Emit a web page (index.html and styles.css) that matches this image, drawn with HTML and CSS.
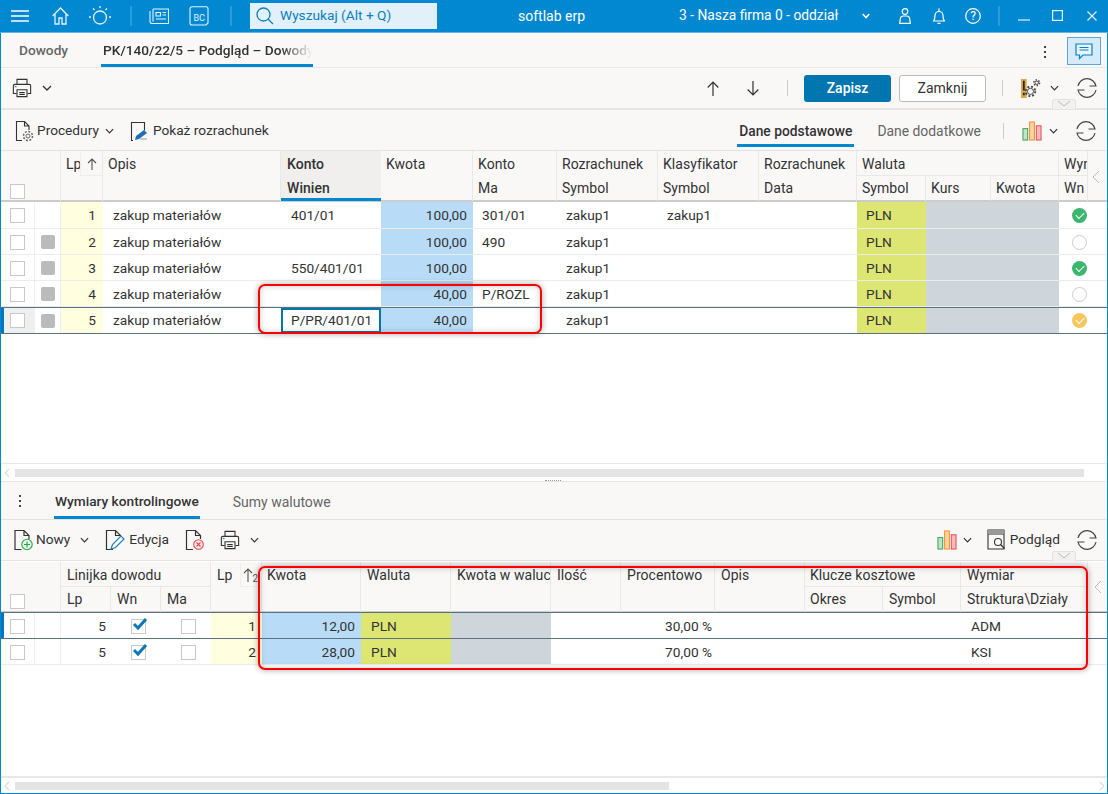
FILE: index.html
```html
<!DOCTYPE html>
<html lang="pl">
<head>
<meta charset="utf-8">
<title>softlab erp</title>
<link rel="stylesheet" href="styles.css">
</head>
<body>
<svg class="defs" width="0" height="0">
  <symbol id="i-print" viewBox="0 0 22 22"><g fill="none" stroke="#333" stroke-width="1.2"><path d="M5.500 7V1.500h11V7"/><path d="M5 17H1.500V8.500A1.500 1.500 0 0 1 3 7h16a1.500 1.500 0 0 1 1.500 1.500V17H17"/><path d="M5.500 13h11v7.500h-11z"/><path d="M8 16h6M8 18h6"/></g><path d="M3 9.500h2" stroke="#0288d1" stroke-width="1.2"/></symbol>
  <symbol id="i-chev" viewBox="0 0 10 6"><path d="M1 1l4 4 4-4" fill="none" stroke="#333" stroke-width="1.3"/></symbol>
  <symbol id="i-sync" viewBox="0 0 20 20"><g fill="none" stroke="#444" stroke-width="1.2"><path d="M1 8A9.200 9.200 0 0 1 19 8H12.500"/><path d="M19 12A9.200 9.200 0 0 1 1 12H7.500"/></g></symbol>
  <symbol id="i-chart" viewBox="0 0 21 21"><rect x="1" y="8" width="5" height="12" fill="#bfe3c3" stroke="#2da44e"/><rect x="8" y="1" width="5" height="19" fill="#fbd3a1" stroke="#f08a24"/><rect x="15" y="5" width="5" height="15" fill="#f7b9b9" stroke="#e5484d"/></symbol>
  <symbol id="i-doc" viewBox="0 0 20 22"><path d="M8 20.500H1.500v-19h9l5 5V10M10.500 1.500v5h5" fill="none" stroke="#333" stroke-width="1.2"/></symbol>
</svg>

<div class="app">
  <header class="titlebar">
    <svg class="tb-burger" width="18" height="12" viewBox="0 0 18 12"><path d="M0 1h18M0 6h18M0 11h18" stroke="#fff" stroke-width="1.300"/></svg>
    <svg class="tb-home" width="17" height="18" viewBox="0 0 17 18"><path d="M.7 9L8.500 1l7.800 8M3 7v10h4v-6h3v6h4V7" fill="none" stroke="#e3f3fc" stroke-width="1.300"/></svg>
    <svg class="tb-sun" width="22" height="20" viewBox="0 0 22 20"><g fill="none" stroke="#e3f3fc" stroke-width="1.300"><circle cx="11" cy="11.500" r="6.500"/><path d="M11 0v2M4 2.500l1.500 1.500M18 2.500L16.500 4M0 11h2M20 11h2"/></g></svg>
    <span class="tb-sep tb-sep1"></span>
    <svg class="tb-news" width="20" height="16" viewBox="0 0 20 16"><g fill="none" stroke="#e3f3fc" stroke-width="1.100"><path d="M4 1h15.500v14.500H3a2 2 0 0 1-2-2V3"/><path d="M4 1v12.500"/><path d="M7 4.500h4.500V8H7zM13.500 4.500H17M13.500 7H17M7 11h10"/></g></svg>
    <svg class="tb-bc" width="20" height="20" viewBox="0 0 20 20"><path d="M3 .7h14a2 2 0 0 1 2 2V17l-2 2H3a2 2 0 0 1-2-2V2.700a2 2 0 0 1 2-2z" fill="none" stroke="#e3f3fc" stroke-width="1.100"/><text x="4.500" y="15" class="bc-text">BC</text></svg>
    <span class="tb-sep tb-sep2"></span>
    <div class="search">
      <svg width="18" height="18" viewBox="0 0 18 18"><circle cx="7.500" cy="7.500" r="6.500" fill="none" stroke="#0b7fc0" stroke-width="1.300"/><path d="M12 12l5 5" stroke="#0b7fc0" stroke-width="1.300"/></svg>
      <span>Wyszukaj (Alt + Q)</span>
    </div>
    <div class="tb-brand">softlab erp</div>
    <div class="tb-firm">3 - Nasza firma 0 - oddział</div>
    <svg class="tb-firmchev" width="8" height="6" viewBox="0 0 8 6"><path d="M.7 1L4 4.500 7.300 1" fill="none" stroke="#fff" stroke-width="1.700"/></svg>
    <svg class="tb-user" width="12" height="16" viewBox="0 0 12 16"><g fill="none" stroke="#fff" stroke-width="1.200"><circle cx="6" cy="3.500" r="2.800"/><path d="M.7 15.300l.7-5a3 3 0 0 1 3-2.300h3.200a3 3 0 0 1 3 2.300l.7 5z"/></g></svg>
    <svg class="tb-bell" width="12" height="16" viewBox="0 0 12 16"><g fill="none" stroke="#fff" stroke-width="1.200"><path d="M.5 13c1.200-1.300 1.500-3 1.500-5.500a4 4 0 0 1 8 0c0 2.500.3 4.200 1.500 5.500z"/><path d="M4.500 15.300h3M6 .5v3"/></g></svg>
    <svg class="tb-help" width="16" height="16" viewBox="0 0 16 16"><circle cx="8" cy="8" r="7.300" fill="none" stroke="#fff" stroke-width="1.200"/><text x="8" y="12" class="help-text">?</text></svg>
    <span class="tb-sep tb-sep3"></span>
    <svg class="tb-min" width="12" height="2" viewBox="0 0 12 2"><path d="M0 1h12" stroke="#e3f3fc" stroke-width="1.200"/></svg>
    <svg class="tb-max" width="11" height="11" viewBox="0 0 11 11"><rect x=".6" y=".6" width="9.800" height="9.800" fill="none" stroke="#e3f3fc" stroke-width="1.200"/></svg>
    <svg class="tb-close" width="10" height="10" viewBox="0 0 10 10"><path d="M.5.5l9 9M9.500.5l-9 9" stroke="#e3f3fc" stroke-width="1.200"/></svg>
  </header>

  <nav class="tabs">
    <span class="tab-plain">Dowody</span>
    <span class="tab-active"><span class="tab-fade">PK/140/22/5 – Podgląd – Dowody</span></span>
    <span class="kebab"><i></i><i></i><i></i></span>
    <span class="chat">
      <svg width="18" height="17" viewBox="0 0 18 17"><path d="M1 1h16v11H8l-3.500 3.500V12H1z" fill="#e7f4fc" stroke="#0b7fc0" stroke-width="1.200"/><path d="M4.500 4.500h9M4.500 7h9" stroke="#0b7fc0" stroke-width="1.200"/></svg>
    </span>
  </nav>

  <div class="toolbar1">
    <svg class="ic20" width="20" height="20"><use href="#i-print"/></svg>
    <svg class="chev c1" width="10" height="6"><use href="#i-chev"/></svg>
    <span class="grow"></span>
    <svg width="12" height="15" viewBox="0 0 12 15"><path d="M6 15V1M.7 6.500L6 1l5.300 5.500" fill="none" stroke="#333" stroke-width="1.200"/></svg>
    <svg class="arrow2" width="12" height="15" viewBox="0 0 12 15"><path d="M6 0v14M.7 8.500L6 14l5.300-5.500" fill="none" stroke="#333" stroke-width="1.200"/></svg>
    <span class="vsep s1"></span>
    <button class="btn-primary">Zapisz</button>
    <button class="btn-plain">Zamknij</button>
    <span class="vsep s2"></span>
    <svg class="gear" width="21" height="21" viewBox="0 0 22 22"><rect x="1" y="1" width="6" height="20" fill="#d9a848"/><path d="M4 3v10M4 15.500v2.500" stroke="#222" stroke-width="1.800"/><g fill="none" stroke="#444"><circle cx="11" cy="14" r="3.200"/><circle cx="11" cy="14" r="5" stroke-width="2" stroke-dasharray="2 1.930"/><circle cx="17.500" cy="5" r="1.800"/><circle cx="17.500" cy="5" r="3" stroke-width="1.600" stroke-dasharray="1.500 1.640"/></g></svg>
    <svg class="chev c2" width="9" height="6"><use href="#i-chev"/></svg>
    <svg class="sync s3" width="20" height="20"><use href="#i-sync"/></svg>
    <span class="collapse-tab t1"><svg width="14" height="7" viewBox="0 0 14 7"><path d="M1 1l6 5 6-5" fill="none" stroke="#bbb"/></svg></span>
  </div>

  <div class="toolbar2">
    <span class="tool t-proc">
      <svg width="19" height="22" viewBox="0 0 19 22"><path d="M7 20.500H1.500v-19h8l4.500 4.500v4M9.500 1.500V6H14" fill="none" stroke="#333" stroke-width="1.100"/><circle cx="13" cy="16" r="2" fill="none" stroke="#666"/><circle cx="13" cy="16" r="4.500" fill="none" stroke="#666" stroke-width="1.500" stroke-dasharray="2 1.500"/></svg>
      Procedury
    </span>
    <svg class="chev c3" width="9" height="6"><use href="#i-chev"/></svg>
    <span class="tool t-pokaz">
      <svg width="19" height="22" viewBox="0 0 19 22"><path d="M3 20.500H1.500v-18h13v8" fill="none" stroke="#333" stroke-width="1.100"/><path d="M5 20l1-4 8-6 3 3-8 6z" fill="#1f6fb5"/><path d="M10 19h7" stroke="#999"/></svg>
      Pokaż rozrachunek
    </span>
    <span class="grow"></span>
    <span class="sub-active">Dane podstawowe</span>
    <span class="sub-plain">Dane dodatkowe</span>
    <span class="vsep s4"></span>
    <svg class="chart" width="20" height="20"><use href="#i-chart"/></svg>
    <svg class="chev c4" width="9" height="6"><use href="#i-chev"/></svg>
    <svg class="sync s5" width="20" height="20"><use href="#i-sync"/></svg>
  </div>

  <section class="grid grid-top">
    <div class="ghead g1">
      <div class="hc h-check"><span class="cb"></span></div>
      <div class="hc h-status"></div>
      <div class="hc h-lp">Lp<span class="sort"><svg width="10" height="12" viewBox="0 0 10 12"><path d="M5 12V1M1 5l4-4 4 4" fill="none" stroke="#555" stroke-width="1.100"/></svg></span></div>
      <div class="hc h-span">Opis</div>
      <div class="hc h-span h-sel"><b>Konto</b><b>Winien</b></div>
      <div class="hc h-span">Kwota</div>
      <div class="hc h-span"><span>Konto</span><span>Ma</span></div>
      <div class="hc h-span"><span>Rozrachunek</span><span>Symbol</span></div>
      <div class="hc h-span"><span>Klasyfikator</span><span>Symbol</span></div>
      <div class="hc h-span"><span>Rozrachunek</span><span>Data</span></div>
      <div class="hc h-group3">Waluta</div>
      <div class="hc h-group1">Wyn</div>
      <div class="hc h-rest"></div>
      <div class="hc h-sub">Symbol</div>
      <div class="hc h-sub">Kurs</div>
      <div class="hc h-sub">Kwota</div>
      <div class="hc h-sub">Wn</div>
    </div>
    <div class="row first g1"><div class="c"><span class="cb"></span></div><div class="c"></div><div class="c lp">1</div><div class="c txt">zakup materiałów</div><div class="c txt">401/01</div><div class="c kw">100,00</div><div class="c txt">301/01</div><div class="c txt">zakup1</div><div class="c txt">zakup1</div><div class="c"></div><div class="c pln">PLN</div><div class="c gr"></div><div class="c gr"></div><div class="c"><span class="dot ok"></span></div><div class="c"></div></div>
    <div class="row g1"><div class="c"><span class="cb"></span></div><div class="c"><span class="sq"></span></div><div class="c lp">2</div><div class="c txt">zakup materiałów</div><div class="c"></div><div class="c kw">100,00</div><div class="c txt">490</div><div class="c txt">zakup1</div><div class="c"></div><div class="c"></div><div class="c pln">PLN</div><div class="c gr"></div><div class="c gr"></div><div class="c"><span class="dot"></span></div><div class="c"></div></div>
    <div class="row g1"><div class="c"><span class="cb"></span></div><div class="c"><span class="sq"></span></div><div class="c lp">3</div><div class="c txt">zakup materiałów</div><div class="c txt">550/401/01</div><div class="c kw">100,00</div><div class="c"></div><div class="c txt">zakup1</div><div class="c"></div><div class="c"></div><div class="c pln">PLN</div><div class="c gr"></div><div class="c gr"></div><div class="c"><span class="dot ok"></span></div><div class="c"></div></div>
    <div class="row g1"><div class="c"><span class="cb"></span></div><div class="c"><span class="sq"></span></div><div class="c lp">4</div><div class="c txt">zakup materiałów</div><div class="c"></div><div class="c kw">40,00</div><div class="c txt">P/ROZL</div><div class="c txt">zakup1</div><div class="c"></div><div class="c"></div><div class="c pln">PLN</div><div class="c gr"></div><div class="c gr"></div><div class="c"><span class="dot"></span></div><div class="c"></div></div>
    <div class="row g1 sel"><div class="c c-mark c-grey"><span class="cb"></span></div><div class="c"><span class="sq"></span></div><div class="c lp">5</div><div class="c txt">zakup materiałów</div><div class="c txt focus">P/PR/401/01</div><div class="c kw">40,00</div><div class="c"></div><div class="c txt">zakup1</div><div class="c"></div><div class="c"></div><div class="c pln">PLN</div><div class="c gr"></div><div class="c gr"></div><div class="c"><span class="dot warn"></span></div><div class="c"></div></div>
    <span class="side-arrow a1"><svg width="8" height="14" viewBox="0 0 8 14"><path d="M7 1L1 7l6 6" fill="none" stroke="#bbb"/></svg></span>
    <span class="redbox rb1"></span>
  </section>

  <div class="hscroll hs1"><svg width="6" height="10" viewBox="0 0 6 10"><path d="M5 1L1 5l4 4" fill="none" stroke="#ddd" stroke-width="1.300"/></svg><span class="thumb thumb1"></span></div>
  <div class="splitter"><span class="grip"></span></div>

  <nav class="tabs2">
    <span class="kebab k2"><i></i><i></i><i></i></span>
    <span class="sub-active s-wym">Wymiary kontrolingowe</span>
    <span class="sub-plain s-sum">Sumy walutowe</span>
  </nav>

  <div class="toolbar3">
    <span class="tool t-now">
      <svg width="21" height="22" viewBox="0 0 21 22"><use href="#i-doc"/><circle cx="14" cy="15.500" r="5.200" fill="#e6f6e9" stroke="#2da44e" stroke-width="1.100"/><path d="M14 12.500v6M11 15.500h6" stroke="#2da44e" stroke-width="1.100"/></svg>
      Nowy
    </span>
    <svg class="chev c5" width="9" height="6"><use href="#i-chev"/></svg>
    <span class="tool t-edy">
      <svg width="20" height="22" viewBox="0 0 20 22"><use href="#i-doc"/><path d="M6 20l1.500-4.500L16 7l3 3-8.500 8.500z" fill="#fff" stroke="#1f7fc4" stroke-width="1.200"/></svg>
      Edycja
    </span>
    <svg class="t-del" width="20" height="22" viewBox="0 0 20 22"><use href="#i-doc"/><circle cx="13.500" cy="15.500" r="4.800" fill="#fdeaea" stroke="#e5484d" stroke-width="1.100"/><path d="M11.500 13.500l4 4M15.500 13.500l-4 4" stroke="#e5484d" stroke-width="1.100"/></svg>
    <svg class="t-print" width="20" height="20"><use href="#i-print"/></svg>
    <svg class="chev c6" width="9" height="6"><use href="#i-chev"/></svg>
    <span class="grow"></span>
    <svg class="chart" width="20" height="20"><use href="#i-chart"/></svg>
    <svg class="chev c7" width="9" height="6"><use href="#i-chev"/></svg>
    <span class="tool t-pod">
      <svg width="19" height="22" viewBox="0 0 19 22"><path d="M1 1h16v19H1z M1 5h16" fill="none" stroke="#333" stroke-width="1.100"/><rect x="1" y="1" width="16" height="4" fill="#999"/><circle cx="11" cy="13" r="3.500" fill="#fff" stroke="#333" stroke-width="1.100"/><path d="M13.500 15.500l4 4" stroke="#333" stroke-width="1.300"/></svg>
      Podgląd
    </span>
    <svg class="sync s6" width="20" height="20"><use href="#i-sync"/></svg>
    <span class="collapse-tab t2"><svg width="14" height="7" viewBox="0 0 14 7"><path d="M1 1l6 5 6-5" fill="none" stroke="#bbb"/></svg></span>
  </div>

  <section class="grid grid-bot">
    <div class="ghead g2">
      <div class="hc h-check"><span class="cb"></span></div>
      <div class="hc h-status"></div>
      <div class="hc b-group">Linijka dowodu</div>
      <div class="hc h-lp2">Lp<span class="sort sort2"><svg width="16" height="14" viewBox="0 0 16 14"><path d="M5 14V1M1 5l4-4 4 4" fill="none" stroke="#555" stroke-width="1.100"/><text x="9.500" y="14" class="sort-n">2</text></svg></span></div>
      <div class="hc h-span">Kwota</div>
      <div class="hc h-span">Waluta</div>
      <div class="hc h-span">Kwota w waluci</div>
      <div class="hc h-span">Ilość</div>
      <div class="hc h-span">Procentowo</div>
      <div class="hc h-span">Opis</div>
      <div class="hc b-group2">Klucze kosztowe</div>
      <div class="hc b-group3">Wymiar</div>
      <div class="hc h-rest"></div>
      <div class="hc h-sub">Lp</div>
      <div class="hc h-sub">Wn</div>
      <div class="hc h-sub">Ma</div>
      <div class="hc h-sub">Okres</div>
      <div class="hc h-sub">Symbol</div>
      <div class="hc h-sub">Struktura\Działy</div>
    </div>
    <div class="row g2 sel2"><div class="c c-mark"><span class="cb"></span></div><div class="c"></div><div class="c num">5</div><div class="c center"><span class="cb on"><svg width="16" height="14" viewBox="0 0 16 14"><path d="M2 7l4 4 8-9" fill="none" stroke="#0b78b8" stroke-width="3"/></svg></span></div><div class="c center"><span class="cb"></span></div><div class="c lp">1</div><div class="c kw">12,00</div><div class="c pln">PLN</div><div class="c gr"></div><div class="c"></div><div class="c num pct">30,00 %</div><div class="c"></div><div class="c"></div><div class="c"></div><div class="c txt">ADM</div><div class="c"></div></div>
    <div class="row g2"><div class="c"><span class="cb"></span></div><div class="c"></div><div class="c num">5</div><div class="c center"><span class="cb on"><svg width="16" height="14" viewBox="0 0 16 14"><path d="M2 7l4 4 8-9" fill="none" stroke="#0b78b8" stroke-width="3"/></svg></span></div><div class="c center"><span class="cb"></span></div><div class="c lp">2</div><div class="c kw">28,00</div><div class="c pln">PLN</div><div class="c gr"></div><div class="c"></div><div class="c num pct">70,00 %</div><div class="c"></div><div class="c"></div><div class="c"></div><div class="c txt">KSI</div><div class="c"></div></div>
    <span class="side-arrow a2"><svg width="8" height="14" viewBox="0 0 8 14"><path d="M7 1L1 7l6 6" fill="none" stroke="#bbb"/></svg></span>
    <span class="redbox rb2"></span>
  </section>

  <div class="hscroll hs2"><svg width="6" height="10" viewBox="0 0 6 10"><path d="M5 1L1 5l4 4" fill="none" stroke="#ddd" stroke-width="1.300"/></svg><span class="thumb thumb2"></span><span class="grow"></span><svg width="6" height="10" viewBox="0 0 6 10"><path d="M1 1l4 4-4 4" fill="none" stroke="#ddd" stroke-width="1.300"/></svg></div>
</div>
</body>
</html>
```
FILE: styles.css
```css
* { box-sizing: border-box; }
html, body { margin: 0; padding: 0; }
body { width: 1108px; height: 794px; overflow: hidden; background: #fff; font: 13.7px/1 Roboto, "Liberation Sans", sans-serif; color: #333; }
.defs { position: absolute; }
svg { display: block; flex: none; }
.grow { flex: 1; }

.app { width: 1108px; height: 794px; display: flex; flex-direction: column; border: 1px solid #0288d1; border-top: 0; background: #fff; position: relative; }

/* title bar */
.titlebar { height: 33px; margin: 0 -1px; background: #0288d1; border-bottom: 1px solid #5fb4e3; display: flex; align-items: center; color: #fff; flex: none; }
.tb-burger { margin-left: 11px; }
.tb-home { margin-left: 23px; }
.tb-sun { margin-left: 20px; }
.tb-sep { width: 2px; height: 20px; background: #2a9bdb; }
.tb-sep1 { margin-left: 19px; }
.tb-news { margin-left: 17px; }
.tb-bc { margin-left: 20px; }
.tb-sep2 { margin-left: 21px; }
.bc-text { font: 9px Roboto, sans-serif; fill: #e3f3fc; }
.help-text { font: 12px Roboto, sans-serif; fill: #fff; text-anchor: middle; }
.search { margin-left: 18px; width: 187px; height: 26px; background: #e1f0f9; color: #0b7fc0; display: flex; align-items: center; gap: 6px; padding-left: 6px; }
.tb-brand { margin-left: 81px; width: 66px; white-space: nowrap; font-size: 14px; }
.tb-firm { margin-left: 95px; white-space: nowrap; width: 159px; font-size: 13.8px; }
.tb-firmchev { margin-left: 24px; }
.tb-user { margin-left: 29px; }
.tb-bell { margin-left: 22px; }
.tb-help { margin-left: 20px; }
.tb-sep3 { margin-left: 17px; }
.tb-min { margin-left: 18px; margin-top: 8px; }
.tb-max { margin-left: 22px; margin-top: -2px; }
.tb-close { margin-left: 24px; margin-top: 0; }

/* document tabs */
.tabs { height: 35px; background: #f9f8f7; border-bottom: 1px solid #e8e8e6; display: flex; align-items: stretch; padding-left: 18px; flex: none; }
.tab-plain { color: #666; font-weight: 500; padding-top: 11px; width: 82px; }
.tab-active { width: 212px; border-bottom: 3px solid #0288d1; padding: 11px 0 0 2px; font-weight: 500; color: #333; height: 34px; }
.tab-fade { display: block; width: 209px; white-space: nowrap; overflow: hidden; -webkit-mask-image: linear-gradient(90deg, #000 85%, transparent 100%); mask-image: linear-gradient(90deg, #000 85%, transparent 100%); }
.kebab { display: flex; flex-direction: column; gap: 3px; margin-left: 731px; margin-top: 13px; }
.kebab i { width: 2px; height: 2px; background: #444; display: block; }
.chat { margin-left: 21px; margin-top: 4px; width: 34px; height: 28px; background: #d5ebf9; border: 1px solid #5aa8d6; display: flex; align-items: center; justify-content: center; }

/* main toolbar */
.toolbar1 { height: 42px; background: #f9f8f7; border-bottom: 2px solid #e5e5e3; display: flex; align-items: center; padding-left: 11px; position: relative; flex: none; }
.chev.c1 { margin-left: 10px; }
.arrow2 { margin-left: 28px; }
.vsep { width: 1px; height: 16px; background: #ccc; }
.vsep.s1 { margin-left: 28px; }
.btn-primary { margin-left: 16px; width: 87px; height: 27px; border: 0; border-radius: 3px; background: #0076b0; color: #fff; font: 500 14px Roboto, sans-serif; padding: 0; }
.btn-plain { margin-left: 8px; width: 87px; height: 27px; border: 1px solid #bbb; border-radius: 3px; background: #fff; color: #333; font: 14px Roboto, sans-serif; padding: 0; }
.vsep.s2 { margin-left: 16px; }
.gear { margin-left: 17px; }
.chev.c2 { margin-left: 9px; }
.sync.s3 { margin-left: 18px; margin-right: 10px; }
.collapse-tab { position: absolute; width: 24px; height: 10px; background: #f2f1ef; border: 1px solid #e2e2e0; border-bottom: 0; border-radius: 3px 3px 0 0; display: flex; justify-content: center; }
.collapse-tab.t1 { left: 1051px; bottom: -1px; }

/* second toolbar */
.toolbar2 { height: 41px; padding-top: 1px; background: #f9f8f7; border-bottom: 1px solid #e3e3e1; display: flex; align-items: center; padding-left: 14px; flex: none; }
.tool { display: flex; align-items: center; white-space: nowrap; color: #333; }
.t-proc { gap: 3px; }
.chev.c3 { margin-left: 6px; }
.t-pokaz { gap: 4px; margin-left: 16px; }
.sub-active { font-weight: 500; font-size: 13.8px; color: #333; border-bottom: 3px solid #0288d1; align-self: flex-end; height: 27px; margin-bottom: 3px; padding: 5px 2px 0; }
.sub-plain { color: #666; font-size: 13.9px; align-self: flex-end; height: 27px; margin-bottom: 3px; padding-top: 5px; margin-left: 23px; }
.vsep.s4 { margin-left: 22px; }
.toolbar2 .chart { margin-left: 18px; }
.chev.c4 { margin-left: 7px; }
.sync.s5 { margin-left: 18px; margin-right: 11px; }

/* grids */
.grid { position: relative; flex: none; }
.grid-top { height: 312px; }
.grid-bot { flex: 1; }
.g1 { display: grid; grid-template-columns: 34px 26px 42px 178px 100px 92px 84px 101px 101px 98px 69px 65px 68px 29px 1fr; }
.g2 { display: grid; grid-template-columns: 34px 26px 50px 50px 50px 51px 99px 90px 100px 70px 94px 90px 78px 78px 127px 1fr; }
.ghead { background: #f9f8f7; grid-template-rows: 25px 25px; border-bottom: 2px solid #ccc; height: 51px; }
.hc { font-size: 14px; letter-spacing: .05px; color: #333; border-right: 1px solid #e8e8e6; padding: 6px 0 0 5px; white-space: nowrap; overflow: hidden; }
.g2 .hc { padding-left: 6px; }
.g2 .hc:nth-child(5), .g2 .b-group2, .g2 .h-sub:nth-last-child(3) { padding-left: 5px; }
.h-check, .h-status, .h-lp, .h-span, .h-lp2 { grid-row: 1 / 3; }
.h-check { padding: 33px 0 0 9px; border-right: 0; grid-column: 1; }
.g2 .h-check { padding: 32px 0 0 9px; }
.h-status, .g2 .h-status { padding: 0; grid-column: 2; }
.h-lp { display: flex; padding: 6px 0 0 5px; position: relative; }
.h-lp2 { position: relative; grid-column: 6; }
.sort { position: absolute; top: 1px; right: 0; width: 22px; height: 24px; border: 1px solid #eee; border-top: 0; border-right: 0; display: flex; align-items: center; justify-content: center; }
.sort2 { right: 0; width: 21px; }
.sort-n { font: 10px Roboto, sans-serif; fill: #555; }
.h-span { display: flex; flex-direction: column; gap: 10px; }
.h-span b, .h-span span { display: block; }
.h-span b { font-weight: 500; }
.h-sel { background: #f0efed; box-shadow: inset 0 -3px 0 #0288d1; border-right: 0; padding-left: 6px; }
.h-group3 { grid-column: span 3; border-bottom: 1px solid #e8e8e6; }
.h-group1 { border-bottom: 1px solid #e8e8e6; }
.h-rest { grid-row: 1 / 3; grid-column: -2 / -1; border: 0; }
.h-sub { padding-top: 5px; }
.b-group { grid-column: 3 / span 3; grid-row: 1; border-bottom: 1px solid #e8e8e6; }
.b-group2 { grid-column: 13 / span 2; grid-row: 1; border-bottom: 1px solid #e8e8e6; }
.b-group3 { grid-column: 15; grid-row: 1; border-bottom: 1px solid #e8e8e6; }

.grid-bot .ghead { margin-top: 1px; }

.row { --t: 2px; height: 26px; border-bottom: 1px solid #ecece9; position: relative; background: #fff; }
.row.first { --t: 1px; height: 27px; }
.c { display: flex; align-items: center; color: #333; min-width: 0; white-space: nowrap; padding-top: 1px; }
.row .c:nth-child(-n+2) { border-right: 1px solid #f0f0ee; }
.c > .cb { margin-left: 9px; }
.txt { padding-left: 10px; padding-top: var(--t); }
.g1 .c.txt:nth-child(n+7) { padding-left: 9px; }
.lp { background: #ffffe0; justify-content: flex-end; padding-right: 6px; padding-top: var(--t); }
.g1 .lp { padding-right: 7px; }
.kw { background: #b8dcf8; justify-content: flex-end; padding-right: 6px; padding-top: var(--t); }
.pln { background: #dde672; padding-left: 10px; padding-top: var(--t); }
.g1 .pln { padding-left: 9px; }
.gr { background: #ced6dc; }
.num { justify-content: flex-end; padding-right: 5px; padding-top: var(--t); }
.pct { padding-right: 3px; }
.center { justify-content: center; padding-left: 5px; }
.center > .cb { margin-left: 0; }
.cb { display: inline-block; width: 15px; height: 15px; background: #fff; border: 1px solid #c8c8c8; position: relative; }
.cb.on svg { position: absolute; left: 0; top: -3px; }
.sq { width: 14px; height: 14px; border-radius: 2px; background: #bbb; margin-left: 6px; }
.dot { width: 15px; height: 15px; border-radius: 50%; border: 1px solid #ccc; background: #fff; margin-left: 13px; position: relative; }
.dot.ok, .dot.warn { border: 0; }
.dot.ok { background: #3db56e; }
.dot.warn { background: #f7c65c; }
.dot.ok::after, .dot.warn::after { content: ""; position: absolute; left: 4px; top: 4px; width: 7px; height: 4px; border-left: 1.500px solid #fff; border-bottom: 1.500px solid #fff; transform: rotate(-45deg); }

.row.sel { --t: 0; border-top: 1px solid #5a7280; border-bottom: 1px solid #5a7280; height: 27px; }
.sel .c { padding-top: 0; }
.sel2 { border-top: 1px solid #5a7280; border-bottom: 1px solid #5a7280; margin-top: -1px; height: 27px; }
.c-mark { box-shadow: inset 3px 0 0 #0277bd; }
.c-grey { background: #efefef; }
.focus { border: 2px solid #0277a8; padding-left: 8px; background: #fff; }

.side-arrow { position: absolute; }
.a1 { left: 1091px; top: 19px; }
.a2 { left: 1093px; top: 19px; }
.redbox { position: absolute; border: 2px solid #f00; border-radius: 7px; box-shadow: 0 0 6px rgba(0,0,0,.35), inset 0 0 6px rgba(0,0,0,.2); pointer-events: none; }
.rb1 { left: 257px; top: 133px; width: 284px; height: 50px; }
.rb2 { left: 257px; top: 5px; width: 830px; height: 104px; }

/* scrollbars */
.hscroll { display: flex; align-items: center; border-top: 1px solid #e8e8e6; background: #fff; padding-left: 3px; flex: none; }
.hs1 { height: 18px; }
.hs2 { height: 17px; border-top-width: 2px; padding-right: 2px; }
.thumb { height: 8px; background: #e4e4e4; }
.thumb1 { width: 1069px; margin-left: 5px; }
.thumb2 { width: 654px; margin-left: 5px; }
.splitter { height: 1px; background: #e5e5e3; position: relative; flex: none; }
.grip { position: absolute; left: 544px; top: -1px; width: 16px; height: 2px; border-top: 1px dotted #999; }

/* detail tabs */
.tabs2 { height: 38px; background: #f9f8f7; border-bottom: 1px solid #e3e3e1; display: flex; align-items: flex-end; flex: none; }
.kebab.k2 { margin: 0 0 12px 18px; align-self: flex-end; }
.s-wym { margin: 0 0 0 33px; height: 26px; padding: 2px 1px 0; font-size: 13.7px; }
.s-sum { margin: 0 0 0 33px; height: 26px; padding-top: 2px; font-size: 14px; }

/* detail toolbar */
.toolbar3 { height: 41px; background: #f9f8f7; border-bottom: 1px solid #e3e3e1; display: flex; align-items: center; padding-left: 12px; position: relative; flex: none; }
.t-now { gap: 2px; }
.chev.c5 { margin-left: 10px; }
.t-edy { gap: 4px; margin-left: 16px; }
.t-del { margin-left: 16px; }
.t-print { margin-left: 15px; }
.chev.c6 { margin-left: 10px; }
.chev.c7 { margin-left: 6px; }
.t-pod { gap: 4px; margin-left: 15px; }
.sync.s6 { margin-left: 17px; margin-right: 10px; }
.collapse-tab.t2 { left: 1051px; bottom: -1px; }
```
